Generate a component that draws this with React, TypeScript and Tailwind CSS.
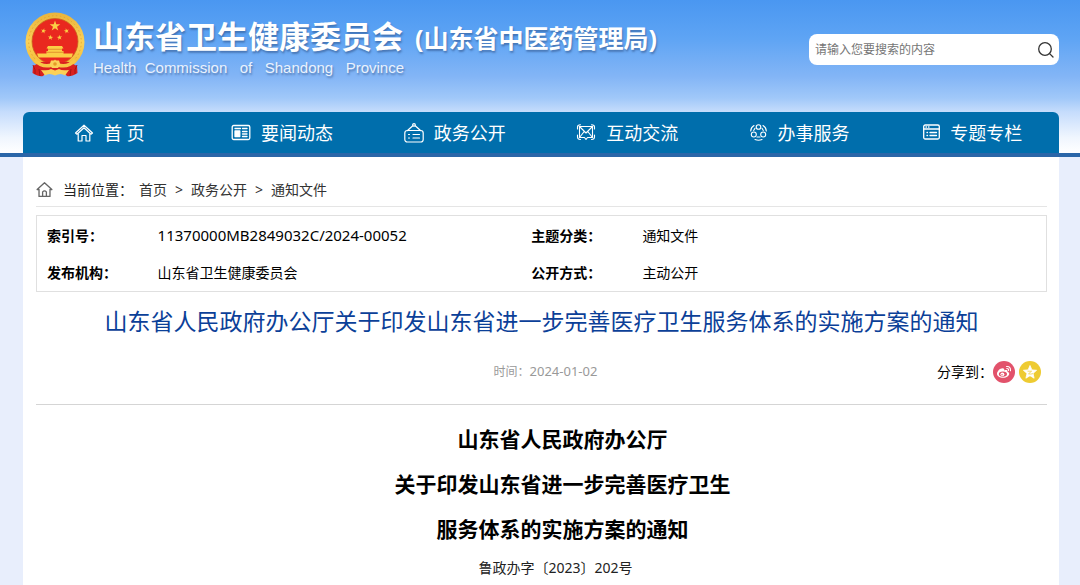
import React from "react";

const stroke = {
  fill: "none",
  stroke: "currentColor",
  strokeLinecap: "round" as const,
  strokeLinejoin: "round" as const,
};

function Emblem() {
  const star = "M0-1 .2245-.309 .951-.309 .363.118 .588.809 0 .382-.588.809-.363.118-.951-.309-.2245-.309Z";
  return (
    <svg viewBox="0 0 60 66" className="h-[66px] w-[60px] shrink-0" role="img" aria-label="国徽">
      <defs>
        <linearGradient id="gold" x1="0" y1="0" x2="0" y2="1">
          <stop offset="0" stopColor="#e9b43c" />
          <stop offset=".5" stopColor="#fbd158" />
          <stop offset="1" stopColor="#f0b52e" />
        </linearGradient>
      </defs>
      <circle cx="30" cy="30" r="29.5" fill="url(#gold)" />
      <circle cx="30" cy="30" r="26.3" fill="none" stroke="#e0a02c" strokeWidth=".8" strokeDasharray="1.500 2.500" />
      <circle cx="30" cy="29.500" r="23" fill="#e9281f" stroke="#c9641c" strokeWidth=".8" />
      <g fill="#fbcf45">
        <path d={star} transform="translate(30 14) scale(5.6)" />
        <path d={star} transform="translate(18.5 19) rotate(15) scale(2.8)" />
        <path d={star} transform="translate(41.5 19) rotate(-15) scale(2.8)" />
        <path d={star} transform="translate(25.5 25.5) rotate(8) scale(2.8)" />
        <path d={star} transform="translate(34.5 25.5) rotate(-8) scale(2.8)" />
        <path d="M23 34H37L38.500 36.500H37V39H38.500V41.500H48L46.500 45.500H13.500L12 41.500H21.500V39H23V36.500H21.500Z" />
      </g>
      <path d="M23 37.300H37M21.500 40.300H38.500" stroke="#dc8428" strokeWidth=".8" />
      <path d="M8 54 7.500 61Q14 65 18 64L23 59H37L42 64Q46 65 52.500 61L52 54 44 50H16Z" fill="#d9201f" />
      <path d="M10 48Q17 56 27 53L30 50 33 53Q43 56 50 48" fill="none" stroke="#f7c646" strokeWidth="3.500" />
      <path d="M26 48.500H34L35.500 53 33 56H27L24.500 53Z" fill="#fbd158" />
      <circle cx="30" cy="52" r="1.800" fill="#e59a26" />
      <path d="M16 58Q23 59 26 57L30 58.500 34 57Q37 59 44 58L40 63.500Q36 60.500 30 63.500 24 60.500 20 63.500Z" fill="#fbd158" />
      <path d="M8 53Q11 58 10 62M52 53Q49 58 50 62M14 57 15 64M46 57 45 64" fill="none" stroke="#a81515" strokeWidth="1" />
    </svg>
  );
}

function NavHome() {
  return (
    <svg viewBox="0 0 20 20" className="size-5" {...stroke} strokeWidth="1.200">
      <path d="M1.500 10 10 2.200 18.500 10 17 11.200 10 4.800 3 11.200Z" />
      <path d="M4.200 11V18H8V12.500H12V18H15.800V11" />
    </svg>
  );
}
function NavNews() {
  return (
    <svg viewBox="0 0 20 20" className="size-5" {...stroke} strokeWidth="1.300">
      <rect x="1.200" y="2.500" width="17.600" height="14" rx="1.500" />
      <path d="M4 5.500H9.500M11.500 5.500H16M11.500 8.500H16M11.500 11H16M11.500 13.500H16" />
      <rect x="4" y="8" width="4.800" height="5.500" fill="currentColor" />
    </svg>
  );
}
function NavBoard() {
  return (
    <svg viewBox="0 0 20 20" className="size-5" {...stroke} strokeWidth="1.200">
      <circle cx="10" cy="1.900" r="1.300" />
      <path d="M8.800 2.800 3.500 7.500M11.200 2.800 16.500 7.500" />
      <rect x=".8" y="7.500" width="18.400" height="11.500" rx="2.500" />
      <path d="M4.500 11.500H5.500M9 11.500H15.500M4.500 15H5.500M9 15H15.500" />
    </svg>
  );
}
function NavExchange() {
  return (
    <svg viewBox="0 0 20 20" className="size-5" {...stroke} strokeWidth="1.100">
      <path d="M3.500 3.500H16.500V14.500H11.500L10 16.500 8.500 14.500H3.500Z" />
      <path d="M3.500 3.500 10 10 16.500 3.500M3.500 14.500 8.200 8.500M16.500 14.500 11.800 8.500M1.500 6V4Q1.500 1.800 4.500 1.800M18.500 6V4Q18.500 1.800 15.500 1.800M1.500 12V14Q1.500 16.500 4.500 16.500M18.500 12V14Q18.500 16.500 15.500 16.500" />
    </svg>
  );
}
function NavService() {
  return (
    <svg viewBox="1.5 1.5 17 17" className="size-[17px]" {...stroke} strokeWidth="1.100">
      <circle cx="10" cy="4.500" r="2.300" />
      <circle cx="5.300" cy="12" r="2.500" />
      <circle cx="14.700" cy="12" r="2.500" />
      <path d="M5.500 3Q2.200 5 2.200 8.500M14.500 3Q17.800 5 17.800 8.500M6.500 17Q10 18.500 13.500 17M6.500 5.800 5.200 8M13.500 5.800 14.800 8M8.500 14.500H11.500" />
    </svg>
  );
}
function NavTopic() {
  return (
    <svg viewBox="1.5 1.5 17 17" className="size-[17px]" {...stroke} strokeWidth="1.300">
      <rect x="2.200" y="2.500" width="15.600" height="14" rx="1.500" />
      <path d="M2.200 6.500H17.800M4.500 4.500H5M7 4.500H7.500M5.500 10H6M8.500 10H15M5.500 13H6M8.500 13H15" />
    </svg>
  );
}

const nav = [
  { label: "首 页", Icon: NavHome },
  { label: "要闻动态", Icon: NavNews },
  { label: "政务公开", Icon: NavBoard },
  { label: "互动交流", Icon: NavExchange },
  { label: "办事服务", Icon: NavService },
  { label: "专题专栏", Icon: NavTopic },
];

const info = [
  ["索引号：", <span className="text-[15px]">11370000MB2849032C/2024-00052</span>, "主题分类：", "通知文件"],
  ["发布机构：", "山东省卫生健康委员会", "公开方式：", "主动公开"],
];

export default function App() {
  return (
    <div className="flex min-h-screen flex-col bg-[#e8eefc] font-['Noto_Sans','Noto_Sans_CJK_SC',sans-serif] text-sm text-black">
      <header className="border-b-4 border-[#2b66a8] bg-[linear-gradient(#4a97f1_0%,#5ea4f4_25%,#83b5f6_50%,#a0c8f9_64%,#c5dcfc_73%,#f0f6fe_90%,#fff_100%)] pr-[21px] pl-[23px]">
        <div className="flex h-28 items-start justify-between">
          <div className="flex items-start gap-2 pt-3 pl-0.5">
            <Emblem />
            <div className="text-white [text-shadow:1px_2px_2px_rgba(40,70,120,0.5)]">
              <h1 className="flex items-start gap-3 font-bold whitespace-nowrap">
                <span className="text-[31px] leading-[48px]">山东省卫生健康委员会</span>
                <span className="pt-1 text-[25px] leading-11">(山东省中医药管理局)</span>
              </h1>
              <p className="font-['Liberation_Sans',Arial,sans-serif] text-[15px] leading-4 text-[#eaf2fd]">
                Health{"\u00a0 "}Commission{"\u00a0\u00a0 "}of{"\u00a0\u00a0 "}Shandong{"\u00a0\u00a0 "}Province
              </p>
            </div>
          </div>
          <form className="mt-[34px] flex h-[31px] w-[250px] items-center rounded-lg bg-white px-1" onSubmit={(e) => e.preventDefault()}>
            <input
              type="search"
              aria-label="搜索"
              placeholder="请输入您要搜索的内容"
              className="min-w-0 flex-1 bg-transparent px-0.5 text-xs outline-none placeholder:text-[#757575]"
            />
            <button type="submit" aria-label="搜索" className="text-[#333]">
              <svg viewBox="0 0 18 18" className="size-[18px]" {...stroke} strokeWidth="1.300">
                <circle cx="8" cy="8" r="6.300" />
                <path d="M12.600 12.600 16 16" />
              </svg>
            </button>
          </form>
        </div>
        <nav className="grid h-[41px] grid-cols-6 rounded-t-md bg-[#006eac] text-lg text-white">
          {nav.map(({ label, Icon }) => (
            <a key={label} href="#" className="flex items-center justify-center gap-2.5 whitespace-nowrap">
              <Icon />
              {label}
            </a>
          ))}
        </nav>
      </header>

      <main className="mr-[21px] ml-[23px] flex-1 bg-white pr-3 pl-[13px]">
        <nav aria-label="当前位置" className="flex items-center gap-2 border-b border-[#e5e5e5] pt-4 leading-[33px] text-[#333]">
          <svg viewBox="0 0 18 18" className="mr-0.5 size-[17px] text-[#666]" {...stroke} strokeWidth="1.400">
            <path d="M1.200 9 9 1.800 16.800 9H14.800V16.300H3.200V9Z" />
            <path d="M7 16V11.500Q9 9.500 11 11.500V16" />
          </svg>
          <span className="-mr-0.5 text-[#222]">当前位置：</span>
          <a href="#">首页</a>
          <span>&gt;</span>
          <a href="#">政务公开</a>
          <span>&gt;</span>
          <a href="#">通知文件</a>
        </nav>

        <table className="mt-2 w-full table-fixed border border-[#e0e0e0]">
          <colgroup>
            <col className="w-[11%]" />
            <col className="w-[37%]" />
            <col className="w-[11%]" />
            <col className="w-[41%]" />
          </colgroup>
          <tbody>
            {info.map(([a, b, c, d], i) => (
              <tr key={i} className="h-[38px]">
                <th scope="row" className="pt-0.5 pl-2.5 text-left">{a}</th>
                <td className="pt-0.5 pl-2.5">{b}</td>
                <th scope="row" className="pt-0.5 pl-2.5 text-left">{c}</th>
                <td className="pt-0.5 pl-2.5">{d}</td>
              </tr>
            ))}
          </tbody>
        </table>

        <h2 className="mt-2.5 text-center text-[23px] leading-[38px] text-[#0b4098]">
          山东省人民政府办公厅关于印发山东省进一步完善医疗卫生服务体系的实施方案的通知
        </h2>

        <div className="grid h-[65px] grid-cols-[1fr_auto_1fr] items-center border-b border-[#d5d5d5]">
          <p className="col-start-2 pl-2 text-xs text-[#999]">
            时间：<time className="text-[13px]">2024-01-02</time>
          </p>
          <div className="flex items-center justify-end gap-1 pr-1.5">
            <span className="-mr-1">分享到：</span>
            <a href="#" aria-label="微博">
              <svg viewBox="0 0 22 22" className="size-[22px]">
                <circle cx="11" cy="11" r="11" fill="#e2526b" />
                <path d="M9.500 7.200C7 7.200 4 10.200 4 12.800 4 15.300 7 16.800 10 16.800 13.800 16.800 16.200 14.600 16.200 12.800 16.200 11.600 15.300 11 14.400 10.800 14.900 9.200 13.500 8.600 11.300 9.500 11.500 8 10.900 7.200 9.500 7.200Z" fill="#fff" />
                <ellipse cx="9.900" cy="13.100" rx="4.100" ry="2.700" fill="#e2526b" />
                <circle cx="9.400" cy="13.300" r="1.900" fill="#fff" />
                <circle cx="9" cy="13.700" r=".7" fill="#e2526b" />
                <path d="M13.500 5.500Q17.800 5 17.500 9.800M13.800 7.500Q15.800 7.400 15.500 9.500" fill="none" stroke="#fff" strokeWidth="1.100" strokeLinecap="round" />
              </svg>
            </a>
            <a href="#" aria-label="QQ空间">
              <svg viewBox="0 0 22 22" className="size-[22px]">
                <circle cx="11" cy="11" r="11" fill="#eecb32" />
                <path d="M11 4.500 12.900 8.900 17.600 9.300 14 12.400 15.100 17.200 11 14.700 6.900 17.200 8 12.400 4.400 9.300 9.100 8.900Z" fill="#fff" stroke="#fff" strokeWidth=".8" strokeLinejoin="round" />
                <path d="M8.500 10.200H12.600L9.500 12.800Q12 13.500 14 12.600" fill="none" stroke="#eecb32" strokeWidth=".7" />
              </svg>
            </a>
          </div>
        </div>

        <article className="pt-3 text-center">
          <h3 className="text-[21px] leading-[45px] font-bold">
            <span className="block indent-[2em]">山东省人民政府办公厅</span>
            <span className="block indent-[2em]">关于印发山东省进一步完善医疗卫生</span>
            <span className="block indent-[2em]">服务体系的实施方案的通知</span>
          </h3>
          <p className="indent-[2em] leading-8 text-[#222]">鲁政办字〔2023〕202号</p>
        </article>
      </main>
    </div>
  );
}
